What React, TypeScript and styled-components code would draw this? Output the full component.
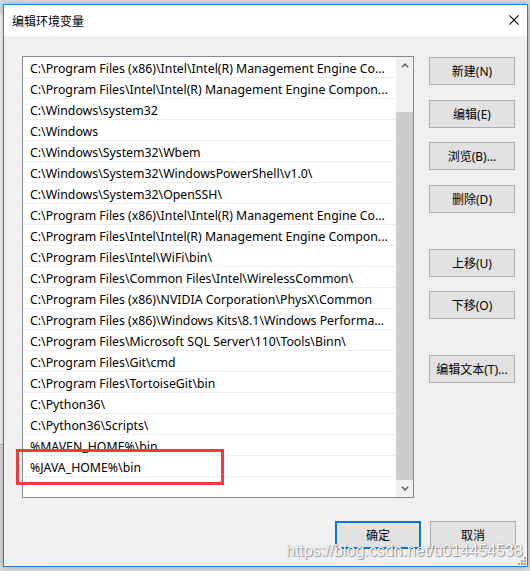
import React from "react";
import styled, { createGlobalStyle } from "styled-components";

const GlobalStyle = createGlobalStyle`
  html, body {
    margin: 0;
    padding: 0;
  }
  body {
    background: #dcdcdc;
    font-family: "Noto Sans", "Noto Sans CJK SC", sans-serif;
  }
`;

const paths = [
  "C:\\Program Files (x86)\\Intel\\Intel(R) Management Engine Co...",
  "C:\\Program Files\\Intel\\Intel(R) Management Engine Compon...",
  "C:\\Windows\\system32",
  "C:\\Windows",
  "C:\\Windows\\System32\\Wbem",
  "C:\\Windows\\System32\\WindowsPowerShell\\v1.0\\",
  "C:\\Windows\\System32\\OpenSSH\\",
  "C:\\Program Files (x86)\\Intel\\Intel(R) Management Engine Co...",
  "C:\\Program Files\\Intel\\Intel(R) Management Engine Compon...",
  "C:\\Program Files\\Intel\\WiFi\\bin\\",
  "C:\\Program Files\\Common Files\\Intel\\WirelessCommon\\",
  "C:\\Program Files (x86)\\NVIDIA Corporation\\PhysX\\Common",
  "C:\\Program Files (x86)\\Windows Kits\\8.1\\Windows Performa...",
  "C:\\Program Files\\Microsoft SQL Server\\110\\Tools\\Binn\\",
  "C:\\Program Files\\Git\\cmd",
  "C:\\Program Files\\TortoiseGit\\bin",
  "C:\\Python36\\",
  "C:\\Python36\\Scripts\\",
  "%MAVEN_HOME%\\bin",
  "%JAVA_HOME%\\bin",
];

// space above each button on the right
const sideButtons = [
  { label: "新建(N)", space: 0 },
  { label: "编辑(E)", space: 15 },
  { label: "浏览(B)...", space: 14 },
  { label: "删除(D)", space: 15 },
  { label: "上移(U)", space: 36 },
  { label: "下移(O)", space: 14 },
  { label: "编辑文本(T)...", space: 36 },
];

const App = () => {
  return (
    <>
      <GlobalStyle />
      <Screen>
        <BackWindow />
        <Dialog>
          <TitleBar>
            <Title>编辑环境变量</Title>
            <CloseButton>
              <svg width="12" height="12" viewBox="0 0 12 12">
                <rect x="-0.6" y="5.4" width="13.2" height="1.2" fill="#111111" transform="rotate(45 6 6)" />
                <rect x="-0.6" y="5.4" width="13.2" height="1.2" fill="#111111" transform="rotate(-45 6 6)" />
              </svg>
            </CloseButton>
          </TitleBar>

          <Content>
            <ListBox>
              <Rows>
                {paths.map((p, i) => (
                  <Row key={i}>{p}</Row>
                ))}
              </Rows>
              <Scrollbar>
                <ArrowButton>
                  <svg width="8" height="5" viewBox="0 0 8 5">
                    <path d="M0.8 4.3 L4 1.1 L7.2 4.3" fill="none" stroke="#606060" strokeWidth="1.5" />
                  </svg>
                </ArrowButton>
                <Track>
                  <Thumb />
                </Track>
                <ArrowButton>
                  <svg width="8" height="5" viewBox="0 0 8 5">
                    <path d="M0.8 0.7 L4 3.9 L7.2 0.7" fill="none" stroke="#606060" strokeWidth="1.5" />
                  </svg>
                </ArrowButton>
              </Scrollbar>
            </ListBox>

            <SideColumn>
              {sideButtons.map((b) => (
                <Button key={b.label} $space={b.space}>
                  {b.label}
                </Button>
              ))}
            </SideColumn>
          </Content>

          <Footer>
            <Button $primary>确定</Button>
            <Button>取消</Button>
          </Footer>

          <Highlight />
          <Watermark>https://blog.csdn.net/u014454538</Watermark>
          <Grip>
            <svg width="10" height="8" viewBox="0 0 10 8">
              <rect x="8" y="0" width="2" height="2" fill="#a0a0a0" />
              <rect x="5" y="3" width="2" height="2" fill="#a0a0a0" />
              <rect x="8" y="3" width="2" height="2" fill="#a0a0a0" />
              <rect x="2" y="6" width="2" height="2" fill="#a0a0a0" />
              <rect x="5" y="6" width="2" height="2" fill="#a0a0a0" />
              <rect x="8" y="6" width="2" height="2" fill="#a0a0a0" />
            </svg>
          </Grip>
        </Dialog>
      </Screen>
    </>
  );
};

const Screen = styled.div`
  width: 530px;
  height: 571px;
  display: flex;
  align-items: flex-start;
  padding-top: 4px;
  box-sizing: border-box;
  overflow: hidden;
`;

const BackWindow = styled.div`
  width: 3px;
  height: 430px;
  margin-top: 10px;
  background: #f6f6f6;
  border-bottom: 1px solid #b8b8b8;
`;

const Dialog = styled.div`
  position: relative;
  width: 525px;
  height: 563px;
  box-sizing: border-box;
  border: 1px solid #1883d7;
  background: #f0f0f0;
  box-shadow: 0 0 6px rgba(0, 0, 0, 0.3);
  display: flex;
  flex-direction: column;
`;

const TitleBar = styled.div`
  height: 31px;
  flex-shrink: 0;
  box-sizing: border-box;
  background: #ffffff;
  display: flex;
  align-items: center;
  justify-content: space-between;
  padding: 0 5px 0 8px;
`;

const Title = styled.span`
  font-family: "Noto Sans CJK SC", sans-serif;
  font-size: 12px;
  color: #000;
  padding-bottom: 1px;
`;

const CloseButton = styled.span`
  display: inline-flex;
  align-items: center;
  justify-content: center;
  width: 16px;
  height: 16px;
  margin-bottom: 1px;
`;

const Content = styled.div`
  display: flex;
  align-items: flex-start;
  padding: 20px 0 0 18px;
`;

const ListBox = styled.div`
  width: 392px;
  height: 442px;
  box-sizing: border-box;
  border: 1px solid #828790;
  background: #ffffff;
  display: flex;
`;

const Rows = styled.div`
  flex: 1;
  min-width: 0;
  display: flex;
  flex-direction: column;
`;

const Row = styled.div`
  height: 20px;
  line-height: 24px;
  border-bottom: 1px solid #ededed;
  padding-left: 7px;
  font-size: 12.3px;
  color: #000;
  white-space: nowrap;
  overflow: hidden;
`;

const Scrollbar = styled.div`
  width: 17px;
  background: #f0f0f0;
  display: flex;
  flex-direction: column;
`;

const ArrowButton = styled.div`
  height: 17px;
  flex-shrink: 0;
  display: flex;
  align-items: center;
  justify-content: center;
`;

const Track = styled.div`
  flex: 1;
  display: flex;
  flex-direction: column;
  padding-top: 38px;
`;

const Thumb = styled.div`
  flex: 1;
  background: #cdcdcd;
`;

const SideColumn = styled.div`
  display: flex;
  flex-direction: column;
  margin-left: 15px;
  padding-top: 1px;
`;

const Button = styled.div<{ $space?: number; $primary?: boolean }>`
  width: 86px;
  height: 28px;
  box-sizing: border-box;
  margin-top: ${(p) => p.$space ?? 0}px;
  border: ${(p) => (p.$primary ? "2px solid #0078d7" : "1px solid #adadad")};
  background: #e1e1e1;
  display: flex;
  align-items: center;
  justify-content: center;
  font-family: "Noto Sans", "Noto Sans CJK SC", sans-serif;
  font-size: 12px;
  color: #000;
  white-space: nowrap;
`;

const Footer = styled.div`
  display: flex;
  justify-content: flex-end;
  gap: 9px;
  padding: 23px 11px 0 0;
`;

const Highlight = styled.div`
  position: absolute;
  left: 12px;
  top: 444px;
  width: 208px;
  height: 36px;
  box-sizing: border-box;
  border: 3px solid #ee3b3b;
  pointer-events: none;
`;

const Watermark = styled.div`
  position: absolute;
  left: 282px;
  top: 538px;
  font-family: "Liberation Sans", Arial, sans-serif;
  font-size: 16px;
  line-height: 16px;
  color: #ffffff;
  text-shadow: 1px 1px 1px rgba(0, 0, 0, 0.4), 0 0 1px rgba(0, 0, 0, 0.35);
  white-space: nowrap;
  pointer-events: none;
`;

const Grip = styled.div`
  position: absolute;
  right: 1px;
  bottom: 1px;
  display: flex;
`;

export default App;
